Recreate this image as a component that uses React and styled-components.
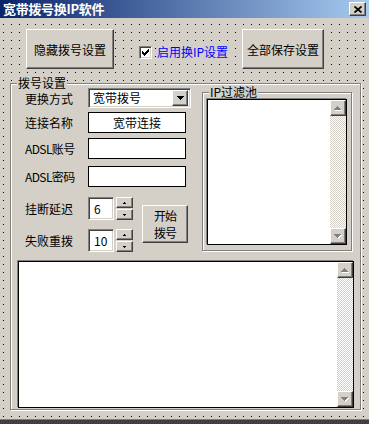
import React from "react";
import styled, { createGlobalStyle } from "styled-components";

const GlobalStyle = createGlobalStyle`
  html, body { margin: 0; padding: 0; }
  body {
    background: #d4d0c8;
    font-family: "Noto Sans CJK SC", "Liberation Sans", sans-serif;
    font-size: 12px;
    color: #000;
  }
  * { box-sizing: border-box; }
`;

const raised = `
  background: #d4d0c8;
  border: 1px solid;
  border-color: #fff #404040 #404040 #fff;
  box-shadow: inset -1px -1px 0 #808080;
`;

const sunken = `
  background: #fff;
  border: 1px solid;
  border-color: #808080 #fff #fff #808080;
  box-shadow: inset 1px 1px 0 #404040, inset -1px -1px 0 #d4d0c8;
`;

const Window = styled.div`
  width: 369px;
  height: 424px;
  display: flex;
  flex-direction: column;
  background: #d4d0c8;
  overflow: hidden;
`;

const TitleBar = styled.div`
  height: 18px;
  flex: none;
  display: flex;
  align-items: center;
  justify-content: space-between;
  padding: 0 3px 0 3px;
  background: linear-gradient(to right, #0a246a, #a6caf0);
`;

const Title = styled.span`
  color: #fff;
  font-weight: bold;
  font-size: 13px;
  line-height: 16px;
  letter-spacing: -0.3px;
`;

const CloseButton = styled.div`
  ${raised}
  width: 17px;
  height: 14px;
  display: flex;
  align-items: center;
  justify-content: center;
`;

const Body = styled.div`
  height: 401px;
  flex: none;
  display: flex;
  flex-direction: column;
  background-color: #d4d0c8;
  background-image: linear-gradient(90deg, #d4d0c8 7px, transparent 7px),
    linear-gradient(#d4d0c8 7px, #000 7px);
  background-size: 8px 8px;
  background-position: 4px 7px;
`;

const BottomEdge = styled.div`
  flex: none;
  height: 5px;
  border-top: 1px solid #808080;
  background: #404040;
`;

const TopRow = styled.div`
  display: flex;
  align-items: center;
  margin-top: 11px;
  padding-left: 26px;
  height: 40px;
`;

const PushButton = styled.div`
  ${raised}
  width: ${(p) => p.$w}px;
  height: ${(p) => p.$h}px;
  display: flex;
  align-items: center;
  justify-content: center;
  font-size: 12px;
  line-height: 13px;
  text-align: center;
  flex: none;
`;

const CheckArea = styled.div`
  width: 128px;
  padding-left: 25px;
  display: flex;
  align-items: center;
  margin-top: 6px;
`;

const CheckBox = styled.div`
  ${sunken}
  width: 13px;
  height: 13px;
  flex: none;
  display: flex;
  align-items: center;
  justify-content: center;
`;

const CheckLabel = styled.span`
  margin-left: 5px;
  color: #0000ff;
  font-size: 12px;
  line-height: 14px;
  background: #d4d0c8;
`;

const GroupBox = styled.div`
  position: relative;
  width: ${(p) => p.$w}px;
  height: ${(p) => p.$h}px;
  margin-top: ${(p) => p.$mt || 0}px;
  margin-left: ${(p) => p.$ml || 0}px;
  flex: none;
  background: #d4d0c8;
  border: 1px solid #808080;
  box-shadow: inset 1px 1px 0 #fff, 1px 1px 0 #fff;
`;

const GroupCaption = styled.span`
  position: absolute;
  top: -7px;
  left: ${(p) => p.$left}px;
  padding: 0 1px;
  line-height: 12px;
  font-size: 12px;
  background: #d4d0c8;
`;

const Upper = styled.div`
  display: flex;
  align-items: flex-start;
`;

const LeftCol = styled.div`
  width: 191px;
  padding: 4px 0 0 14px;
  display: flex;
  flex-direction: column;
`;

const FieldRow = styled.div`
  display: flex;
  align-items: center;
  margin-top: ${(p) => p.$mt || 0}px;
`;

const FieldLabel = styled.span`
  width: 63px;
  flex: none;
  font-size: 12px;
  line-height: 14px;
  padding-top: ${(p) => (p.$low ? "2px" : "0")};
  letter-spacing: ${(p) => (p.$tight ? "-0.6px" : "0")};
`;

const Select = styled.div`
  ${sunken}
  width: 103px;
  height: 20px;
  display: flex;
  align-items: center;
  justify-content: space-between;
  padding: 2px;
`;

const SelectText = styled.span`
  padding-left: 2px;
  line-height: 14px;
`;

const DropButton = styled.div`
  ${raised}
  width: 16px;
  height: 16px;
  display: flex;
  align-items: center;
  justify-content: center;
`;

const TextBox = styled.div`
  width: 98px;
  height: 21px;
  background: #fff;
  border: 1px solid #000;
  display: flex;
  align-items: center;
  justify-content: center;
  line-height: 14px;
`;

const SpinBlock = styled.div`
  display: flex;
  align-items: flex-start;
  margin-top: 10px;
`;

const SpinCol = styled.div`
  display: flex;
  flex-direction: column;
  gap: 9px;
`;

const SpinRow = styled.div`
  display: flex;
  align-items: center;
`;

const SpinEdit = styled.div`
  ${sunken}
  width: 26px;
  height: 23px;
  display: flex;
  align-items: center;
  padding-left: 5px;
  line-height: 14px;
`;

const Spinner = styled.div`
  width: 17px;
  height: 23px;
  margin-left: 2px;
  display: flex;
  flex-direction: column;
  gap: 1px;
`;

const SpinHalf = styled.div`
  ${raised}
  flex: 1;
  display: flex;
  align-items: center;
  justify-content: center;
`;

const StartButton = styled(PushButton)`
  margin-left: 9px;
  margin-top: 8px;
  flex-direction: column;
  letter-spacing: -1px;
`;

const ButtonLine = styled.span`
  display: block;
  line-height: 17px;
  height: 17px;
`;

const ListBox = styled.div`
  width: ${(p) => p.$w}px;
  height: ${(p) => p.$h}px;
  margin-top: ${(p) => p.$mt || 0}px;
  margin-left: ${(p) => p.$ml || 0}px;
  background: #fff;
  border: 1px solid #000;
  box-shadow: -1px -1px 0 #808080;
  display: flex;
  flex: none;
`;

const ListArea = styled.div`
  flex: 1;
`;

const ScrollBar = styled.div`
  width: 16px;
  display: flex;
  flex-direction: column;
`;

const ScrollTrack = styled.div`
  flex: 1;
  background: repeating-conic-gradient(#fff 0 25%, #d4d0c8 0 50%);
  background-size: 2px 2px;
`;

const ScrollButton = styled.div`
  ${raised}
  width: 16px;
  height: 16px;
  display: flex;
  align-items: center;
  justify-content: center;
`;

const Glyph = styled.svg`
  display: block;
`;

function Triangle({ dir = "down", rows = [7, 5, 3, 1], color = "#000", shadow }) {
  const w = rows[0];
  const list = dir === "up" ? [...rows].reverse() : rows;
  const pad = shadow ? 1 : 0;
  const draw = (c, off) =>
    list.map((rw, i) => (
      <rect key={c + i} x={(w - rw) / 2 + off} y={i + off} width={rw} height={1} fill={c} />
    ));
  return (
    <Glyph width={w + pad} height={list.length + pad} shapeRendering="crispEdges">
      {shadow && draw(shadow, 1)}
      {draw(color, 0)}
    </Glyph>
  );
}

const checkRows = [
  "......#",
  ".....##",
  "#...###",
  "##.###.",
  "#####..",
  ".###...",
  "..#....",
];

function CheckMark() {
  return (
    <Glyph width={7} height={7} shapeRendering="crispEdges">
      {checkRows.map((r, y) =>
        r.split("").map((c, x) =>
          c === "#" ? <rect key={`${x}-${y}`} x={x} y={y} width={1} height={1} fill="#000" /> : null
        )
      )}
    </Glyph>
  );
}

function CloseGlyph() {
  return (
    <Glyph width={8} height={7} viewBox="0 0 8 7">
      <path d="M0.5 0.5 L7.5 6.5 M7.5 0.5 L0.5 6.5" stroke="#000" strokeWidth="1.8" />
    </Glyph>
  );
}

function VScroll() {
  return (
    <ScrollBar>
      <ScrollButton>
        <Triangle dir="up" color="#808080" shadow="#fff" />
      </ScrollButton>
      <ScrollTrack />
      <ScrollButton>
        <Triangle dir="down" color="#808080" shadow="#fff" />
      </ScrollButton>
    </ScrollBar>
  );
}

function Spin({ value }) {
  return (
    <SpinRow>
      <SpinEdit>{value}</SpinEdit>
      <Spinner>
        <SpinHalf>
          <Triangle dir="up" rows={[3, 1]} />
        </SpinHalf>
        <SpinHalf>
          <Triangle dir="down" rows={[3, 1]} />
        </SpinHalf>
      </Spinner>
    </SpinRow>
  );
}

export default function App() {
  return (
    <>
      <GlobalStyle />
      <Window>
        <TitleBar>
          <Title>宽带拨号换IP软件</Title>
          <CloseButton>
            <CloseGlyph />
          </CloseButton>
        </TitleBar>
        <Body>
          <TopRow>
            <PushButton $w={88} $h={40}>隐藏拨号设置</PushButton>
            <CheckArea>
              <CheckBox>
                <CheckMark />
              </CheckBox>
              <CheckLabel>启用换IP设置</CheckLabel>
            </CheckArea>
            <PushButton $w={82} $h={40}>全部保存设置</PushButton>
          </TopRow>

          <GroupBox $w={351} $h={327} $mt={14} $ml={10}>
            <GroupCaption $left={6}>拨号设置</GroupCaption>
            <Upper>
              <LeftCol>
                <FieldRow>
                  <FieldLabel $low>更换方式</FieldLabel>
                  <Select>
                    <SelectText>宽带拨号</SelectText>
                    <DropButton>
                      <Triangle />
                    </DropButton>
                  </Select>
                </FieldRow>
                <FieldRow $mt={4}>
                  <FieldLabel>连接名称</FieldLabel>
                  <TextBox>宽带连接</TextBox>
                </FieldRow>
                <FieldRow $mt={5}>
                  <FieldLabel $tight>ADSL账号</FieldLabel>
                  <TextBox />
                </FieldRow>
                <FieldRow $mt={7}>
                  <FieldLabel $tight>ADSL密码</FieldLabel>
                  <TextBox />
                </FieldRow>
                <SpinBlock>
                  <SpinCol>
                    <FieldRow>
                      <FieldLabel>挂断延迟</FieldLabel>
                      <Spin value="6" />
                    </FieldRow>
                    <FieldRow>
                      <FieldLabel>失败重拨</FieldLabel>
                      <Spin value="10" />
                    </FieldRow>
                  </SpinCol>
                  <StartButton $w={46} $h={38}>
                    <ButtonLine>开始</ButtonLine>
                    <ButtonLine>拨号</ButtonLine>
                  </StartButton>
                </SpinBlock>
              </LeftCol>

              <GroupBox $w={150} $h={159} $mt={8}>
                <GroupCaption $left={6}>IP过滤池</GroupCaption>
                <ListBox $w={140} $h={146} $mt={6} $ml={4}>
                  <ListArea />
                  <VScroll />
                </ListBox>
              </GroupBox>
            </Upper>

            <ListBox $w={336} $h={147} $mt={9} $ml={7}>
              <ListArea />
              <VScroll />
            </ListBox>
          </GroupBox>
        </Body>
        <BottomEdge />
      </Window>
    </>
  );
}
